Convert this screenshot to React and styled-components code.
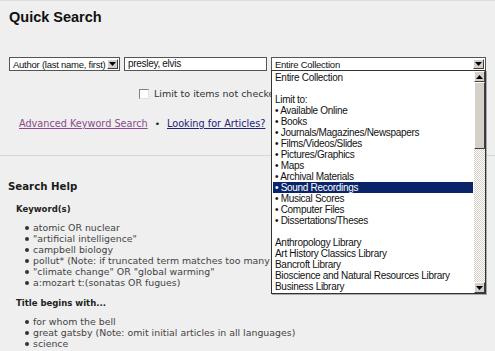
import styled, { createGlobalStyle } from "styled-components"

const GlobalStyle = createGlobalStyle`
  html, body { margin: 0; padding: 0; background: #efefef; }
  body { font-family: "DejaVu Sans", Verdana, sans-serif; }
`

const collectionOptions = [
  { label: "Entire Collection" },
  { label: "" },
  { label: "Limit to:" },
  { label: "Available Online", bullet: true },
  { label: "Books", bullet: true },
  { label: "Journals/Magazines/Newspapers", bullet: true },
  { label: "Films/Videos/Slides", bullet: true },
  { label: "Pictures/Graphics", bullet: true },
  { label: "Maps", bullet: true },
  { label: "Archival Materials", bullet: true },
  { label: "Sound Recordings", bullet: true, selected: true },
  { label: "Musical Scores", bullet: true },
  { label: "Computer Files", bullet: true },
  { label: "Dissertations/Theses", bullet: true },
  { label: "" },
  { label: "Anthropology Library" },
  { label: "Art History Classics Library" },
  { label: "Bancroft Library" },
  { label: "Bioscience and Natural Resources Library" },
  { label: "Business Library" },
  { label: "Center for Tibetan Studies" },
]

const keywordExamples = [
  "atomic OR nuclear",
  "\"artificial intelligence\"",
  "campbell biology",
  "pollut* (Note: if truncated term matches too many terms, you will get an error)",
  "\"climate change\" OR \"global warming\"",
  "a:mozart t:(sonatas OR fugues)",
]

const titleExamples = [
  "for whom the bell",
  "great gatsby (Note: omit initial articles in all languages)",
  "science",
]

const Arrow = ({ up }) => (
  <svg width="7" height="4" viewBox="0 0 7 4">
    <polygon points={up ? "0,4 7,4 3.5,0" : "0,0 7,0 3.5,4"} fill="#000" />
  </svg>
)

const App = () => {
  return (
    <Page>
      <GlobalStyle />
      <Title>Quick Search</Title>
      <FormRow>
        <Select width={111}>
          <SelectText>Author (last name, first)</SelectText>
          <ArrowButton><Arrow /></ArrowButton>
        </Select>
        <TextInput>presley, elvis</TextInput>
        <DropWrap>
          <Select width={215}>
            <SelectText>Entire Collection</SelectText>
            <ArrowButton><Arrow /></ArrowButton>
          </Select>
          <OptionList>
            {collectionOptions.map((o, i) => (
              <Option key={i} selected={o.selected}>
                {o.bullet ? "\u2022 " : ""}{o.label}
              </Option>
            ))}
            <ScrollBar>
              <ScrollButton><Arrow up /></ScrollButton>
              <Thumb />
              <Track />
              <ScrollButton><Arrow /></ScrollButton>
            </ScrollBar>
          </OptionList>
        </DropWrap>
      </FormRow>
      <CheckRow>
        <CheckBox />
        <CheckLabel>Limit to items not checked out</CheckLabel>
      </CheckRow>
      <LinkRow>
        <Link visited>Advanced Keyword Search</Link>
        <Dot>•</Dot>
        <Link>Looking for Articles?</Link>
      </LinkRow>
      <Rule />
      <Help>
        <HelpTitle>Search Help</HelpTitle>
        <SubTitle>Keyword(s)</SubTitle>
        <Examples>
          {keywordExamples.map((t) => <Example key={t}>{t}</Example>)}
        </Examples>
        <SubTitle>Title begins with...</SubTitle>
        <Examples>
          {titleExamples.map((t) => <Example key={t}>{t}</Example>)}
        </Examples>
      </Help>
    </Page>
  )
}

const Page = styled.div`
  width: 495px;
  height: 351px;
  overflow: hidden;
  background: #efefef;
  border-top: 1px solid #dcdcdc;
  box-sizing: border-box;
  position: relative;
  white-space: nowrap;
`

const Title = styled.h1`
  margin: 0;
  padding: 7px 0 0 9px;
  font-family: "Liberation Sans", Arial, sans-serif;
  font-size: 14.5px;
  font-weight: bold;
  color: #111;
  line-height: 18px;
`

const FormRow = styled.div`
  display: flex;
  gap: 4px;
  margin-top: 31px;
  padding-left: 9px;
  position: relative;
  z-index: 2;
`

const Select = styled.div`
  width: ${(p) => p.width}px;
  height: 14px;
  box-sizing: border-box;
  border: 1px solid #555;
  background: #fff;
  display: flex;
  align-items: center;
  justify-content: space-between;
  padding: 0 1px 0 3px;
`

const SelectText = styled.span`
  font-family: "Liberation Sans", Arial, sans-serif;
  font-size: 9.5px;
  color: #111;
  letter-spacing: -0.25px;
`

const ArrowButton = styled.span`
  width: 11px;
  height: 10px;
  box-sizing: border-box;
  background: #d4d0c8;
  border: 1px solid;
  border-color: #fff #404040 #404040 #fff;
  display: flex;
  align-items: center;
  justify-content: center;
`

const TextInput = styled.div`
  width: 143px;
  height: 14px;
  box-sizing: border-box;
  border: 1px solid #555;
  background: #fff;
  padding: 0 3px;
  font-family: "Liberation Sans", Arial, sans-serif;
  font-size: 10px;
  line-height: 12px;
  color: #111;
  letter-spacing: -0.3px;
`

const DropWrap = styled.div`
  position: relative;
`

const OptionList = styled.div`
  position: absolute;
  top: 13px;
  left: 0;
  width: 215px;
  height: 224px;
  box-sizing: border-box;
  border: 1px solid #333;
  background: #fff;
  padding: 1px 12px 0 1px;
  overflow: hidden;
  box-shadow: 1px 1px 0 #aaa;
`

const Option = styled.div`
  height: 11px;
  line-height: 11px;
  padding-left: 2px;
  font-family: "Liberation Sans", Arial, sans-serif;
  font-size: 10px;
  letter-spacing: -0.3px;
  color: ${(p) => (p.selected ? "#fff" : "#111")};
  background: ${(p) => (p.selected ? "#0a246a" : "transparent")};
`

const ScrollBar = styled.div`
  position: absolute;
  top: 0;
  right: 0;
  bottom: 0;
  width: 11px;
  display: flex;
  flex-direction: column;
  background: repeating-conic-gradient(#d4d0c8 0 25%, #fff 0 50%) 0 0 / 2px 2px;
`

const ScrollButton = styled.div`
  height: 11px;
  box-sizing: border-box;
  background: #d4d0c8;
  border: 1px solid;
  border-color: #fff #404040 #404040 #fff;
  display: flex;
  align-items: center;
  justify-content: center;
`

const Thumb = styled.div`
  height: 67px;
  box-sizing: border-box;
  background: #d4d0c8;
  border: 1px solid;
  border-color: #fff #404040 #404040 #fff;
`

const Track = styled.div`
  flex: 1;
`

const CheckRow = styled.div`
  display: flex;
  align-items: center;
  gap: 5px;
  margin-top: 17px;
  padding-left: 139px;
`

const CheckBox = styled.span`
  width: 10px;
  height: 10px;
  box-sizing: border-box;
  background: #fff;
  border: 1px solid;
  border-color: #808080 #e0e0e0 #e0e0e0 #808080;
`

const CheckLabel = styled.span`
  font-size: 9.5px;
  color: #333;
  line-height: 12px;
`

const LinkRow = styled.div`
  display: flex;
  align-items: center;
  gap: 7px;
  margin-top: 17px;
  padding-left: 19px;
`

const Link = styled.a`
  font-size: 9.7px;
  line-height: 13px;
  color: ${(p) => (p.visited ? "#8b4a8b" : "#22227a")};
  text-decoration: underline;
`

const Dot = styled.span`
  font-size: 9px;
  color: #222;
`

const Rule = styled.hr`
  margin: 25px 0 0;
  border: 0;
  border-top: 1px solid #d6d6d6;
  height: 0;
`

const Help = styled.section`
  padding: 24px 0 0 8px;
`

const HelpTitle = styled.h2`
  margin: 0 0 9px;
  font-size: 10.2px;
  font-weight: bold;
  color: #1a1a1a;
  line-height: 14px;
`

const SubTitle = styled.h3`
  margin: 0 0 7px 8px;
  font-size: 8.5px;
  font-weight: bold;
  color: #222;
  line-height: 12px;
`

const Examples = styled.ul`
  margin: 0 0 9px;
  padding-left: 17px;
  list-style: none;
`

const Example = styled.li`
  position: relative;
  padding-left: 8px;
  font-size: 9.4px;
  line-height: 11px;
  color: #444;

  &::before {
    content: "";
    position: absolute;
    left: 0;
    top: 4px;
    width: 4px;
    height: 4px;
    border-radius: 50%;
    background: #333;
  }
`

export default App
